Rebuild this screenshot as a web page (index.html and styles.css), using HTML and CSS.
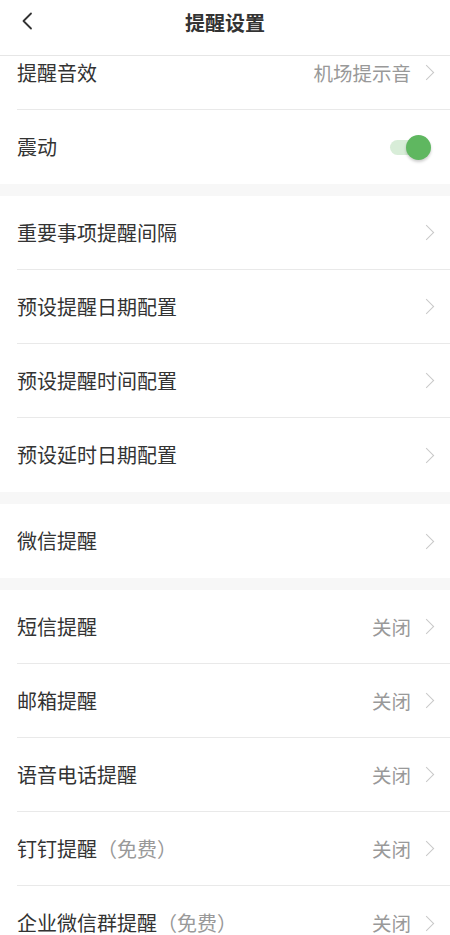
FILE: index.html
```html
<!DOCTYPE html>
<html lang="zh-CN">
<head>
  <meta charset="UTF-8">
  <meta name="viewport" content="width=device-width, initial-scale=1.0">
  <title>提醒设置</title>
  <link rel="stylesheet" href="styles.css">
</head>
<body>
  <div class="nav-bar">
    <span class="back">
      <svg width="12" height="18" viewBox="0 0 12 18"><path d="M10 1.5 L2.5 9 L10 16.5" fill="none" stroke="#333" stroke-width="1.8" stroke-linecap="round" stroke-linejoin="round"/></svg>
    </span>
    <h1>提醒设置</h1>
  </div>

  <div class="page">
    <!-- 铃声与震动 -->
    <div class="group">
      <div class="cell">
        <span class="label">提醒音效</span>
        <span class="value">机场提示音</span>
        <i class="arrow"></i>
      </div>
      <div class="cell">
        <span class="label">震动</span>
        <span class="switch on"><span class="knob"></span></span>
      </div>
    </div>

    <div class="group">
      <div class="cell"><span class="label">重要事项提醒间隔</span><i class="arrow"></i></div>
      <div class="cell"><span class="label">预设提醒日期配置</span><i class="arrow"></i></div>
      <div class="cell"><span class="label">预设提醒时间配置</span><i class="arrow"></i></div>
      <div class="cell"><span class="label">预设延时日期配置</span><i class="arrow"></i></div>
    </div>

    <div class="group">
      <div class="cell"><span class="label">微信提醒</span><i class="arrow"></i></div>
    </div>

    <!-- 其它渠道 -->
    <div class="group">
      <div class="cell"><span class="label">短信提醒</span><span class="value">关闭</span><i class="arrow"></i></div>
      <div class="cell"><span class="label">邮箱提醒</span><span class="value">关闭</span><i class="arrow"></i></div>
      <div class="cell"><span class="label">语音电话提醒</span><span class="value">关闭</span><i class="arrow"></i></div>
      <div class="cell"><span class="label">钉钉提醒<em>（免费）</em></span><span class="value">关闭</span><i class="arrow"></i></div>
      <div class="cell"><span class="label">企业微信群提醒<em>（免费）</em></span><span class="value">关闭</span><i class="arrow"></i></div>
    </div>
  </div>
</body>
</html>
```

FILE: styles.css
```css
body {
  margin: 0;
  padding: 0;
  background-color: #f7f7f7;
  font-family: "Noto Sans CJK SC", "Noto Sans", sans-serif;
  color: #333;
}

/* 顶部导航，盖在列表上 */
.nav-bar {
  position: fixed;
  top: 0;
  left: 0;
  right: 0;
  height: 55px;
  background: #fff;
  border-bottom: 1px solid #e6e6e6;
  display: flex;
  align-items: center;
  justify-content: center;
  z-index: 10;
}
.nav-bar h1 {
  margin: 0;
  font-size: 20px;
  font-weight: bold;
  color: #333;
  line-height: 1;
  margin-top: -10px;
}
.back {
  position: absolute;
  left: 21px;
  top: 12px;
  display: flex;
}

.page {
  padding-top: 36px;
}

.group {
  background: #fff;
  margin-bottom: 12px;
}

.cell {
  height: 73px;
  display: flex;
  align-items: center;
  margin-left: 17px;
  padding-right: 14px;
  border-bottom: 1px solid #e9e9e9;
}
.cell:last-child {
  border-bottom: none;
  height: 74px;
}

.label {
  flex: 1;
  font-size: 20px;
  color: #333;
  line-height: 1;
}
.label em {
  font-style: normal;
  color: #999;
}
.value {
  font-size: 19.5px;
  color: #999;
  line-height: 1;
  margin-right: 10px;
}

.arrow {
  width: 10px;
  height: 10px;
  border-top: 1.5px solid #c8c8c8;
  border-right: 1.5px solid #c8c8c8;
  transform: rotate(45deg);
  margin-right: 4px;
}

/* 开关 */
.switch {
  position: relative;
  width: 38px;
  height: 15px;
  border-radius: 8px;
  background: #d8edd8;
  margin-right: 8px;
}
.switch .knob {
  position: absolute;
  right: -3px;
  top: -5px;
  width: 25px;
  height: 25px;
  border-radius: 50%;
  background: #5fb760;
  box-shadow: 0 2px 3px rgba(0, 0, 0, 0.2);
}
```
